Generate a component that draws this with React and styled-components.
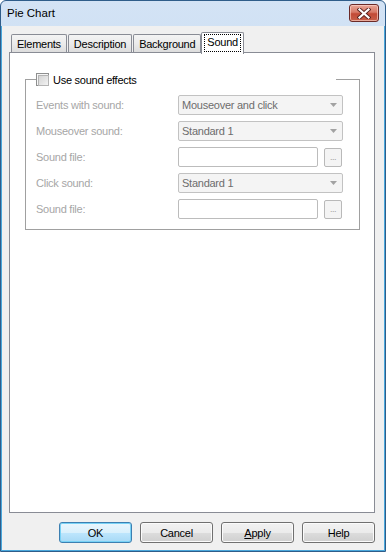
import styled, { createGlobalStyle } from 'styled-components';

// Global page reset:
const GlobalStyle = createGlobalStyle`
   html, body {
      margin: 0;
      padding: 0;
      background: #ffffff;
   }
   body {
      font-family: 'Liberation Sans', Arial, sans-serif;
      font-size: 11px;
      letter-spacing: -0.25px;
      color: #000000;
   }
   * {
      box-sizing: border-box;
   }
`;

// Window frame:
const Window = styled.div`
   width: 386px;
   height: 552px;
   display: flex;
   flex-direction: column;
   border: 1px solid #2f5d8a;
   border-radius: 6px 6px 0 0;
   background: linear-gradient(180deg, #d3e3f5 0%, #c0d6ee 45%, #b8d0ea 100%);
   overflow: hidden;
`;

const TitleBar = styled.div`
   height: 25px;
   flex: none;
   display: flex;
   align-items: flex-start;
   justify-content: space-between;
   padding: 0 6px 0 6px;
`;

const Title = styled.span`
   font-size: 11.5px;
   letter-spacing: 0;
   line-height: 25px;
   color: #000000;
`;

const CloseButton = styled.div`
   width: 30px;
   height: 18px;
   margin-top: 3px;
   border: 1px solid #6b2a27;
   border-radius: 3px;
   background: linear-gradient(180deg, #e8a697 0%, #d77a68 45%, #c24a36 55%, #c8604a 100%);
   box-shadow: inset 0 0 0 1px rgba(255, 220, 210, 0.6);
   display: flex;
   align-items: center;
   justify-content: center;
`;

// Client area:
const Client = styled.div`
   flex: 1;
   display: flex;
   flex-direction: column;
   background: #f0f0f0;
   border: 1px solid #4aa8dc;
   border-top: none;
   padding: 6px 9px 7px 7px;
`;

// Tabs:
const TabStrip = styled.div`
   height: 20px;
   display: flex;
   align-items: flex-end;
   gap: 1px;
   padding-left: 2px;
`;

const Tab = styled.div`
   position: relative;
   height: ${({ $active }) => ($active ? '22px' : '18px')};
   margin: ${({ $active }) => ($active ? '0 -2px -2px -1px' : '0')};
   padding: ${({ $active }) => ($active ? '1px 2px 0 2px' : '0 5px')};
   border: 1px solid #898c95;
   border-bottom: none;
   border-radius: 2px 2px 0 0;
   background: ${({ $active }) =>
      $active ? '#ffffff' : 'linear-gradient(180deg, #f4f4f4 0%, #ebebeb 50%, #dddddd 100%)'};
   z-index: ${({ $active }) => ($active ? 1 : 0)};
   display: flex;
   align-items: ${({ $active }) => ($active ? 'flex-start' : 'center')};
   white-space: nowrap;
`;

const FocusLabel = styled.span`
   display: block;
   padding: 1px 2px 2px 2px;
   border: 1px dotted #000000;
   line-height: 13px;
`;

const TabPanel = styled.div`
   flex: 1;
   background: #ffffff;
   border: 1px solid #898c95;
   padding: 20px 14px 0 15px;
`;

// Group box:
const Group = styled.fieldset`
   margin: 0;
   border: 1px solid #a0a0a0;
   padding: 9px 16px 10px 10px;
`;

const GroupLegend = styled.legend`
   width: 300px;
   height: 13px;
   padding: 0;
   display: flex;
   align-items: center;
   gap: 4px;
`;

const CheckBox = styled.span`
   width: 13px;
   height: 13px;
   flex: none;
   border: 1px solid #8e8f8f;
   background: #f6f6f6;
   padding: 1px;
   &::after {
      content: '';
      display: block;
      width: 100%;
      height: 100%;
      border: 1px solid #b4b4b4;
      background: linear-gradient(135deg, #d4d4d4 0%, #e6e6e6 60%, #f4f4f4 100%);
   }
`;

const Rows = styled.div`
   display: grid;
   grid-template-columns: 142px 1fr;
   grid-auto-rows: 20px;
   row-gap: 6px;
   align-items: center;
`;

const Label = styled.span`
   color: #a6a6a6;
   white-space: nowrap;
`;

const Combo = styled.div`
   height: 20px;
   display: flex;
   align-items: center;
   justify-content: space-between;
   padding: 0 5px 0 3px;
   border: 1px solid #c2c2c2;
   border-radius: 2px;
   background: #f4f4f4;
   color: #6d6d6d;
`;

const FileRow = styled.div`
   display: flex;
   align-items: center;
   gap: 6px;
`;

const TextBox = styled.div`
   width: 140px;
   height: 20px;
   border: 1px solid #bcbcbc;
   border-radius: 2px;
   background: #ffffff;
`;

const BrowseButton = styled.div`
   width: 18px;
   height: 19px;
   border: 1px solid #b9b9b9;
   border-radius: 2px;
   background: #f4f4f4;
   color: #a0a0a0;
   font-size: 9px;
   line-height: 9px;
   display: flex;
   align-items: flex-end;
   justify-content: center;
   padding-bottom: 4px;
   letter-spacing: -0.5px;
`;

// Dialog buttons:
const ButtonRow = styled.div`
   display: flex;
   justify-content: flex-end;
   gap: 8px;
   margin-top: 9px;
`;

const Button = styled.div`
   width: 73px;
   height: 21px;
   border: 1px solid ${({ $default }) => ($default ? '#3c7fb1' : '#707070')};
   border-radius: 3px;
   background: ${({ $default }) =>
      $default
         ? 'linear-gradient(180deg, #eaf6fd 0%, #d9f0fc 50%, #bee6fd 50%, #a7d9f5 100%)'
         : 'linear-gradient(180deg, #f2f2f2 0%, #ebebeb 50%, #dddddd 50%, #cfcfcf 100%)'};
   box-shadow: inset 0 0 0 1px ${({ $default }) => ($default ? '#78d2f6' : '#fbfbfb')};
   display: flex;
   align-items: center;
   justify-content: center;
`;

const Arrow = () => (
   <svg width="7" height="4" viewBox="0 0 7 4">
      <path d="M0 0 H7 L3.5 4 Z" fill="#a2a2a2" />
   </svg>
);

const CloseIcon = () => (
   <svg width="14" height="11" viewBox="0 0 14 11">
      <path d="M2.5 1.5 L11.5 9.5 M11.5 1.5 L2.5 9.5" stroke="#5a2420" strokeWidth="4" strokeLinecap="square" />
      <path d="M2.5 1.5 L11.5 9.5 M11.5 1.5 L2.5 9.5" stroke="#ffffff" strokeWidth="2.2" strokeLinecap="square" />
   </svg>
);

const tabs = ['Elements', 'Description', 'Background', 'Sound'];

const App = () => {
   return (
      <>
         <GlobalStyle />
         <Window>
            <TitleBar>
               <Title>Pie Chart</Title>
               <CloseButton>
                  <CloseIcon />
               </CloseButton>
            </TitleBar>
            <Client>
               <TabStrip>
                  {tabs.map((t) =>
                     t === 'Sound' ? (
                        <Tab key={t} $active>
                           <FocusLabel>{t}</FocusLabel>
                        </Tab>
                     ) : (
                        <Tab key={t}>{t}</Tab>
                     )
                  )}
               </TabStrip>
               <TabPanel>
                  <Group>
                     <GroupLegend>
                        <CheckBox />
                        <span>Use sound effects</span>
                     </GroupLegend>
                     <Rows>
                        <Label>Events with sound:</Label>
                        <Combo>
                           <span>Mouseover and click</span>
                           <Arrow />
                        </Combo>
                        <Label>Mouseover sound:</Label>
                        <Combo>
                           <span>Standard 1</span>
                           <Arrow />
                        </Combo>
                        <Label>Sound file:</Label>
                        <FileRow>
                           <TextBox />
                           <BrowseButton>...</BrowseButton>
                        </FileRow>
                        <Label>Click sound:</Label>
                        <Combo>
                           <span>Standard 1</span>
                           <Arrow />
                        </Combo>
                        <Label>Sound file:</Label>
                        <FileRow>
                           <TextBox />
                           <BrowseButton>...</BrowseButton>
                        </FileRow>
                     </Rows>
                  </Group>
               </TabPanel>
               <ButtonRow>
                  <Button $default>OK</Button>
                  <Button>Cancel</Button>
                  <Button>
                     <span>
                        <u>A</u>pply
                     </span>
                  </Button>
                  <Button>Help</Button>
               </ButtonRow>
            </Client>
         </Window>
      </>
   );
};

export default App;
